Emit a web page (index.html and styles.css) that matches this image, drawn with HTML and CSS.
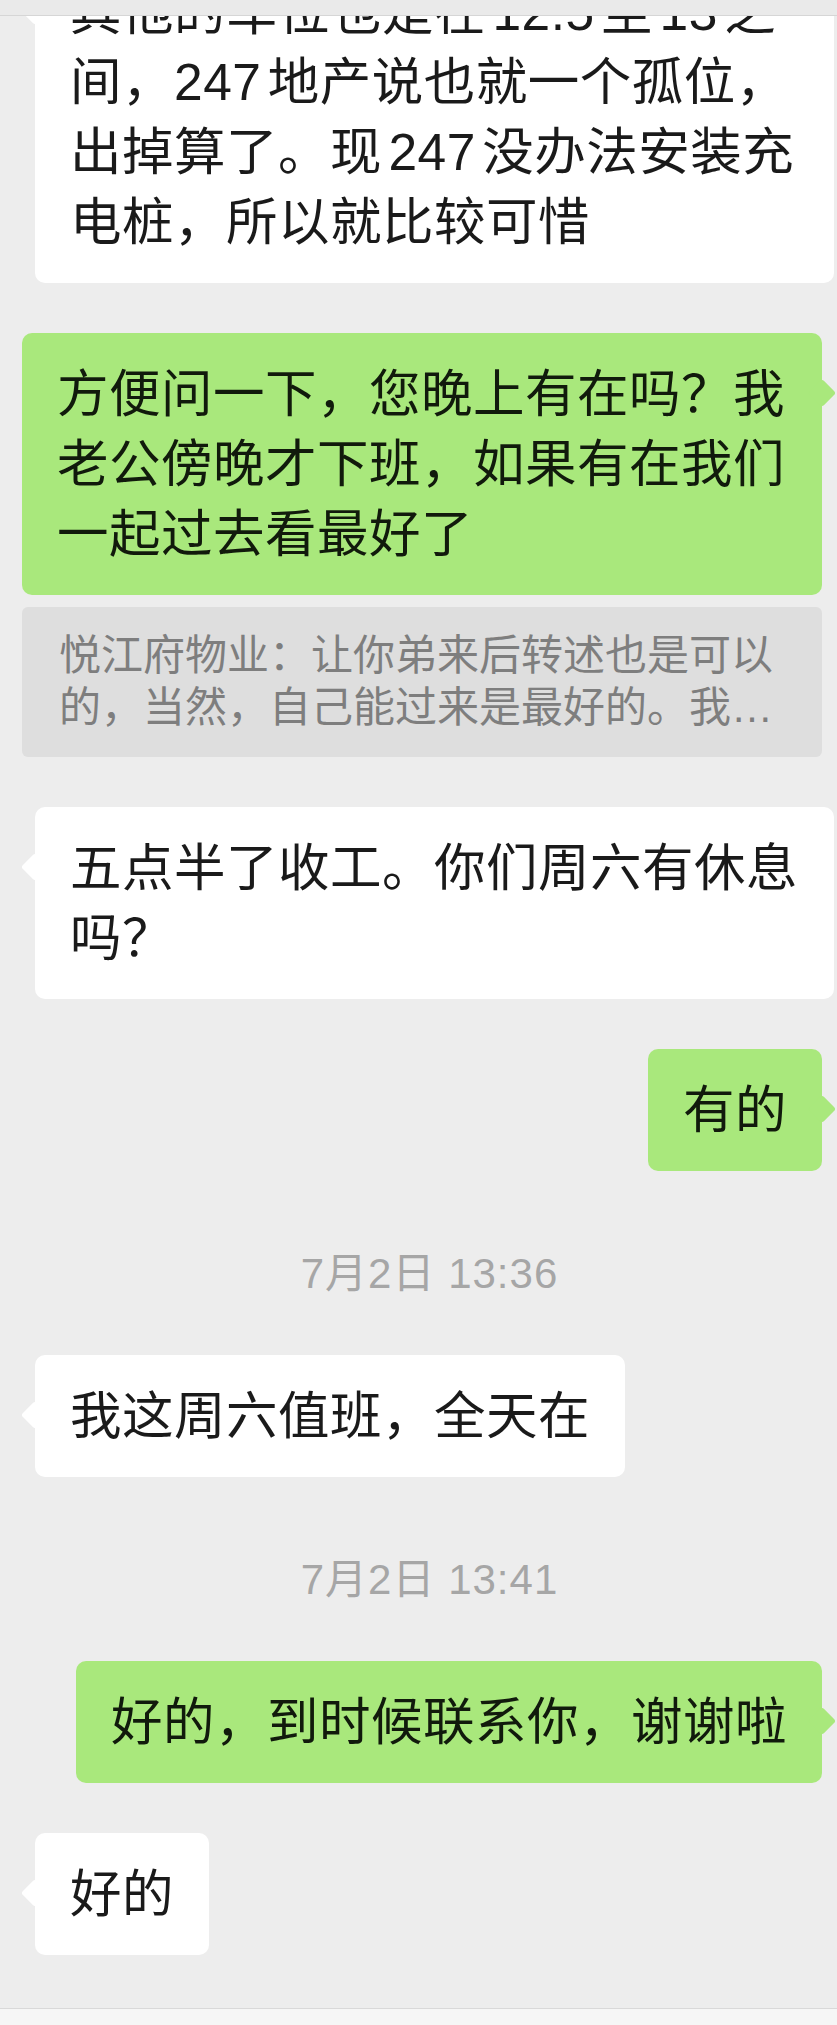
FILE: index.html
```html
<!DOCTYPE html>
<html lang="zh-CN">
<head>
<meta charset="utf-8">
<title>聊天</title>
<link rel="stylesheet" href="styles.css">
</head>
<body>
<div class="screen">
  <div class="topbar"></div>
  <div class="chat">
    <div class="msg left first">
      <div class="bubble">其他的车位也是在12.5至13之间，247地产说也就一个孤位，出掉算了。现247没办法安装充电桩，所以就比较可惜</div>
    </div>
    <div class="msg right">
      <div class="bubble">方便问一下，您晚上有在吗？我老公傍晚才下班，如果有在我们一起过去看最好了</div>
    </div>
    <div class="quote"><div class="quote-text">悦江府物业：让你弟来后转述也是可以的，当然，自己能过来是最好的。我们这边周六周日都有人值班的</div></div>
    <div class="msg left">
      <div class="bubble">五点半了收工。你们周六有休息吗？</div>
    </div>
    <div class="msg right">
      <div class="bubble">有的</div>
    </div>
    <div class="time">7月2日 13:36</div>
    <div class="msg left">
      <div class="bubble">我这周六值班，全天在</div>
    </div>
    <div class="time">7月2日 13:41</div>
    <div class="msg right">
      <div class="bubble">好的，到时候联系你，谢谢啦</div>
    </div>
    <div class="msg left">
      <div class="bubble">好的</div>
    </div>
  </div>
  <div class="bottombar"></div>
</div>
</body>
</html>
```

FILE: styles.css
```css
* {
  box-sizing: border-box;
}

html, body {
  margin: 0;
  padding: 0;
  background: #ededed;
}

body {
  font-family: "Liberation Sans", "Noto Sans CJK SC", sans-serif;
  color: #1a1a1a;
}

.screen {
  width: 837px;
  height: 2025px;
  display: flex;
  flex-direction: column;
  overflow: hidden;
}

.topbar {
  flex: 0 0 auto;
  height: 16px;
  background: #eaeaea;
  border-bottom: 1px solid #d6d6d6;
}

.chat {
  flex: 1 1 auto;
  min-height: 0;
  overflow: hidden;
  display: flex;
  flex-direction: column;
  padding: 0 0 0 22px;
}

.msg {
  margin-top: 50px;
  display: flex;
}

.msg.first {
  margin-top: -65px;
}

.msg.left {
  align-self: flex-start;
  margin-left: 13px;
  max-width: 799px;
}

.msg.right {
  align-self: flex-end;
  margin-right: 15px;
  max-width: 800px;
}

.bubble {
  position: relative;
  background: #ffffff;
  border-radius: 10px;
  padding: 26px 35px;
  font-size: 51.5px;
  line-height: 70px;
  letter-spacing: 0.5px;
  text-autospace: normal;
  color: #1a1a1a;
}

.msg.right .bubble {
  background: #a9e87c;
  color: #111a0c;
}

.bubble::before {
  content: "";
  position: absolute;
  top: 50px;
  width: 20px;
  height: 20px;
  background: inherit;
  border-radius: 3px;
  transform: rotate(45deg);
}

.msg.left .bubble::before {
  left: -10px;
}

.msg.right .bubble::before {
  right: -10px;
}

.quote {
  align-self: flex-end;
  margin-top: 12px;
  margin-right: 15px;
  width: 800px;
  background: #dedede;
  border-radius: 6px;
  padding: 23px 37px;
}

.quote-text {
  font-size: 42px;
  line-height: 52px;
  color: #7e7e7e;
  display: -webkit-box;
  -webkit-box-orient: vertical;
  -webkit-line-clamp: 2;
  overflow: hidden;
}

.time {
  align-self: center;
  margin: 78px 0 -44px;
  font-size: 42px;
  line-height: 50px;
  letter-spacing: 1px;
  color: #a6a6a6;
}

.time + .msg {
  margin-top: 100px;
}

.bottombar {
  flex: 0 0 auto;
  height: 17px;
  background: #f6f6f6;
  border-top: 1px solid #d9d9d9;
}
```
